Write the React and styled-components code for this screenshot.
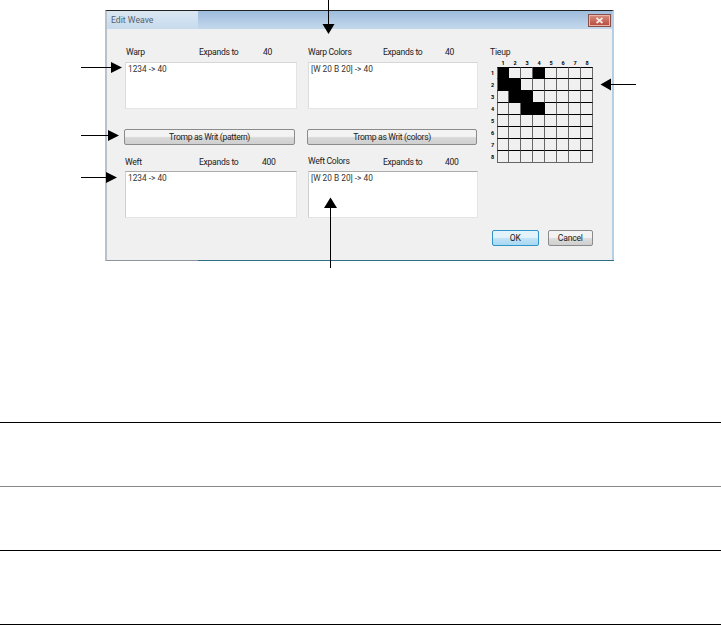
import React from "react";
import styled, { createGlobalStyle } from "styled-components";

const Global = createGlobalStyle`
  html, body { margin: 0; padding: 0; background: #fff; }
  body { font-family: Roboto, "Liberation Sans", Arial, sans-serif; }
`;
const Page = styled.div`
  position: relative;
  width: 721px;
  height: 625px;
  overflow: hidden;
  padding-top: 10px;
  box-sizing: border-box;
`;
const Dialog = styled.div`
  margin-left: 105px;
  width: 509px;
  height: 251px;
  box-sizing: border-box;
  background: #f0f0f0;
  border-top: 1px solid #222;
  border-left: 2px solid #b9c2cc;
  border-right: 2px solid #b5cfe4;
  border-bottom: 1px solid #8f9498;
  display: flex;
  flex-direction: column;
  position: relative;
`;
const BottomAccent = styled.div`
  position: absolute;
  left: 91px;
  right: -2px;
  bottom: -1px;
  height: 1px;
  background: #2f6f86;
`;
const TitleBar = styled.div`
  height: 18px;
  display: flex;
  align-items: center;
  justify-content: space-between;
  background: linear-gradient(180deg, #9ebcdc, #c4d8ec);
  padding-right: 1px;
`;
const TitleTab = styled.div`
  width: 91px;
  height: 100%;
  padding-left: 4px;
  box-sizing: border-box;
  background: linear-gradient(180deg, #dbe7f2, #c6dbee);
  font-size: 8.7px;
  line-height: 18px;
  color: #56626c;
`;
const Close = styled.div`
  width: 23px;
  height: 13px;
  margin-top: 1px;
  background: linear-gradient(180deg, #d9907f, #b6483c);
  border: 1px solid #8a5048;
  box-shadow: inset 0 0 0 1px #e7b5aa;
  box-sizing: border-box;
  display: flex;
  align-items: center;
  justify-content: center;
`;
const Body = styled.div`
  display: grid;
  grid-template-columns: 172px 170px 104px;
  column-gap: 11px;
  padding: 16px 0 0 18px;
  flex: 1;
`;
const Column = styled.div`
  display: flex;
  flex-direction: column;
`;
const ThirdColumn = styled(Column)`
  margin-left: 1px;
`;
const LabelRow = styled.div`
  display: grid;
  grid-template-columns: ${(p) => p.$cols};
  height: 14px;
  margin-bottom: ${(p) => p.$gap}px;
  font-size: 8.6px;
  letter-spacing: -0.3px;
  line-height: 14px;
  color: #222;
  padding-left: ${(p) => p.$indent || 0}px;
`;
const Shifted = styled.span`
  margin-top: ${(p) => p.$dy}px;
`;
const TextBox = styled.div`
  height: 47px;
  box-sizing: border-box;
  background: #fff;
  border: 1px solid #e4e4e4;
  border-top-color: ${(p) => (p.$dark ? "#ababab" : "#d6d6d6")};
  border-left-color: ${(p) => (p.$dark ? "#d0d0d0" : "#dcdcdc")};
  font-size: 8.3px;
  line-height: 12px;
  padding: 0 0 0 2px;
  color: #333;
`;
const WideButton = styled.div`
  height: 16px;
  width: ${(p) => p.$w}px;
  margin: 20px 0 10px -1px;
  box-sizing: border-box;
  border: 1px solid #8b8b8b;
  border-radius: 2px;
  background: linear-gradient(180deg, #f3f3f3 0 45%, #d8d8d8 55%, #cfcfcf);
  font-size: 8.6px;
  letter-spacing: -0.35px;
  line-height: 14px;
  text-align: center;
  color: #222;
`;
const TieupLabel = styled.div`
  height: 14px;
  font-size: 8.6px;
  letter-spacing: -0.2px;
  line-height: 14px;
  color: #222;
`;
const TieupGrid = styled.div`
  display: grid;
  grid-template-columns: 7px repeat(8, 12px);
  grid-template-rows: 8px repeat(8, 12px);
  width: 103px;
`;
const Head = styled.div`
  font-size: 5.5px;
  font-weight: 700;
  line-height: 8px;
  text-align: center;
  color: #000;
`;
const RowHead = styled(Head)`
  line-height: 12px;
  text-align: left;
  padding-left: 1px;
`;
const Cell = styled.div`
  box-sizing: border-box;
  background: ${(p) => (p.$on ? "#000" : "#f0f0f0")};
  border-right: 1px solid ${(p) => (p.$on ? "#000" : "#666")};
  border-bottom: 1px solid #000;
  ${(p) => p.$first && "border-left: 1px solid #666;"}
  ${(p) => p.$top && "border-top: 1px solid #000;"}
  ${(p) => p.$last && "border-bottom-color: #666;"}
`;
const Footer = styled.div`
  display: flex;
  gap: 9px;
  margin-top: 67px;
  margin-left: 2px;
`;
const DialogButton = styled.div`
  height: 16px;
  width: ${(p) => p.$w}px;
  box-sizing: border-box;
  border: 1px solid ${(p) => (p.$primary ? "#2f95c8" : "#8b8b8b")};
  border-radius: 2px;
  background: ${(p) =>
    p.$primary
      ? "linear-gradient(180deg, #e3f3fc 0 45%, #bfe2f6 55%, #a9d8f2)"
      : "linear-gradient(180deg, #f3f3f3 0 45%, #dcdcdc 55%, #cfcfcf)"};
  font-size: 8.6px;
  letter-spacing: -0.2px;
  line-height: 14px;
  text-align: center;
  color: #222;
`;
const Rule = styled.div`
  position: absolute;
  left: 0;
  right: 0;
  top: ${(p) => p.$y}px;
  height: 1px;
  background: ${(p) => p.$c};
`;
const Arrows = styled.svg`
  position: absolute;
  left: 0;
  top: 0;
`;

const on = new Set(["0-0","0-3","1-0","1-1","2-1","2-2","3-2","3-3"]);
const idx = [0,1,2,3,4,5,6,7];

const lines = [
  "M81 67.5H112", "M81 135.5H109", "M81 177.5H107", "M636 84.5H610",
  "M328.5 0V25", "M330.5 268V207",
];
const heads = [
  "M111 62L122 67.5L111 73Z", "M108 130L119 135.5L108 141Z", "M106 172L117 177.5L106 183Z",
  "M611 78.5L600.5 84.5L611 90.5Z", "M322.5 24H334.5L328.5 34Z", "M324 208H337L330.5 197.5Z",
];

export default function App() {
  return (
    <Page>
      <Global />
      <Dialog>
        <TitleBar>
          <TitleTab>Edit Weave</TitleTab>
          <Close>
            <svg width="9" height="7" viewBox="0 0 9 7">
              <path d="M1.5 1L7.5 6M7.5 1L1.5 6" stroke="#f4e6e2" strokeWidth="1.8" />
            </svg>
          </Close>
        </TitleBar>
        <Body>
          <Column>
            <LabelRow $cols="73px 64px 1fr" $indent="1" $gap="3">
              <span>Warp</span><span>Expands to</span><span>40</span>
            </LabelRow>
            <TextBox>1234 -&gt; 40</TextBox>
            <WideButton $w={171}>Tromp as Writ (pattern)</WideButton>
            <LabelRow $cols="74px 63px 1fr" $gap="2">
              <span>Weft</span><span>Expands to</span><span>400</span>
            </LabelRow>
            <TextBox $dark>1234 -&gt; 40</TextBox>
          </Column>
          <Column>
            <LabelRow $cols="75px 62px 1fr" $gap="3">
              <span>Warp Colors</span><span>Expands to</span><span>40</span>
            </LabelRow>
            <TextBox>[W 20 B 20] -&gt; 40</TextBox>
            <WideButton $w={170}>Tromp as Writ (colors)</WideButton>
            <LabelRow $cols="75px 62px 1fr" $gap="2">
              <Shifted $dy={-1}>Weft Colors</Shifted><span>Expands to</span><span>400</span>
            </LabelRow>
            <TextBox $dark>[W 20 B 20] -&gt; 40</TextBox>
          </Column>
          <ThirdColumn>
            <TieupLabel>Tieup</TieupLabel>
            <TieupGrid>
              <Head />
              {idx.map((c) => <Head key={c}>{c + 1}</Head>)}
              {idx.map((r) => (
                <React.Fragment key={r}>
                  <RowHead>{r + 1}</RowHead>
                  {idx.map((c) => (
                    <Cell key={c} $on={on.has(`${r}-${c}`)} $first={c === 0} $top={r === 0} $last={r === 7} />
                  ))}
                </React.Fragment>
              ))}
            </TieupGrid>
            <Footer>
              <DialogButton $w={47} $primary>OK</DialogButton>
              <DialogButton $w={46}>Cancel</DialogButton>
            </Footer>
          </ThirdColumn>
        </Body>
        <BottomAccent />
      </Dialog>
      <Rule $y={422} $c="#000" />
      <Rule $y={486} $c="#888" />
      <Rule $y={550} $c="#000" />
      <Rule $y={624} $c="#000" />
      <Arrows width="721" height="300" viewBox="0 0 721 300">
        {lines.map((d) => <path key={d} d={d} stroke="#000" strokeWidth="1" fill="none" />)}
        {heads.map((d) => <path key={d} d={d} fill="#000" />)}
      </Arrows>
    </Page>
  );
}
